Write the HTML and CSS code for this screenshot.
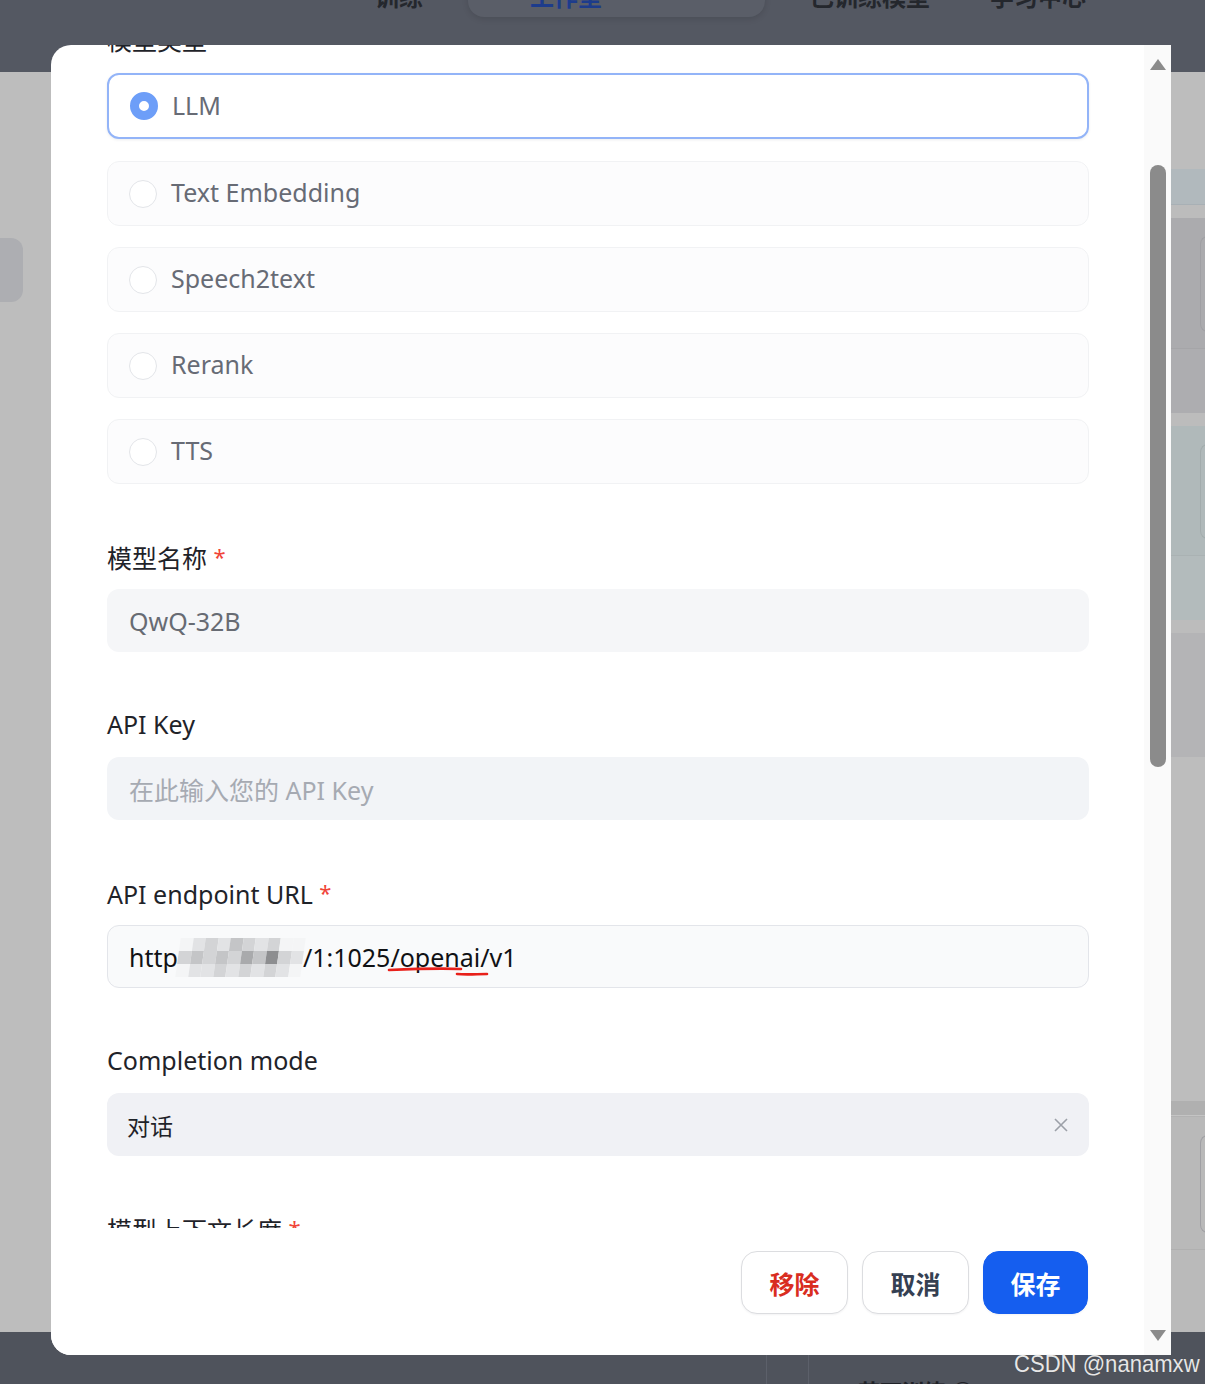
FILE: index.html
```html
<!DOCTYPE html>
<html lang="zh-CN">
<head>
<meta charset="utf-8">
<title>模型设置</title>
<link rel="stylesheet" href="styles.css">
</head>
<body>
<div class="page">
  <header class="topbar">
    <span class="nav-item nav-a">训练</span>
    <div class="nav-pill"><span class="nav-active">工作室</span><span class="nav-chev">⌄</span></div>
    <span class="nav-item nav-b">已训练模型</span>
    <span class="nav-item nav-c">学习中心</span>
  </header>
  <div class="middle">
    <div class="left-col"><div class="left-tab"></div></div>
    <div class="center-col"></div>
    <div class="right-col">
      <div class="band b1"></div>
      <div class="band b2"></div>
      <div class="band b3"></div>
      <div class="band b4"><div class="card-edge"></div></div>
      <div class="band b5"></div>
      <div class="band b3"></div>
      <div class="band b6"><div class="card-edge teal"></div></div>
      <div class="band b7"></div>
      <div class="band b3"></div>
      <div class="band b8"></div>
      <div class="band b9"></div>
      <div class="band b10"></div>
      <div class="band b11"><div class="card-edge"></div></div>
      <div class="band b12"></div>
    </div>
  </div>
  <footer class="bottombar">
    <div class="bottom-line l1"></div>
    <div class="bottom-line l2"></div>
    <span class="bottom-text">节可训练 ○</span>
  </footer>
</div>

<div class="watermark">CSDN @nanamxw</div>

<div class="modal">
  <div class="modal-main">
    <div class="scroll">
      <div class="content">
        <div class="label first">模型类型</div>
        <div class="options">
          <div class="option selected"><span class="radio on"></span><span class="opt-text">LLM</span></div>
          <div class="option"><span class="radio"></span><span class="opt-text">Text Embedding</span></div>
          <div class="option"><span class="radio"></span><span class="opt-text">Speech2text</span></div>
          <div class="option"><span class="radio"></span><span class="opt-text">Rerank</span></div>
          <div class="option"><span class="radio"></span><span class="opt-text">TTS</span></div>
        </div>

        <div class="field">
          <div class="label">模型名称 <span class="req">*</span></div>
          <div class="input filled">QwQ-32B</div>
        </div>

        <div class="field">
          <div class="label">API Key</div>
          <div class="input placeholder">在此输入您的 API Key</div>
        </div>

        <div class="field">
          <div class="label">API endpoint URL <span class="req">*</span></div>
          <div class="input url">
            <span>http</span><span class="mosaic">
              <i class="m0"></i><i class="m1"></i><i class="m2"></i><i class="m1"></i><i class="m3"></i><i class="m2"></i><i class="m1"></i><i class="m2"></i><i class="m0"></i><i class="m0"></i>
              <i class="m2"></i><i class="m3"></i><i class="m2"></i><i class="m3"></i><i class="m2"></i><i class="m4"></i><i class="m3"></i><i class="m5"></i><i class="m2"></i><i class="m1"></i>
              <i class="m0"></i><i class="m1"></i><i class="m1"></i><i class="m2"></i><i class="m1"></i><i class="m2"></i><i class="m1"></i><i class="m2"></i><i class="m1"></i><i class="m0"></i>
            </span><span class="after">/1:1025/<span class="mark">openai/</span>v1</span>
            <svg class="scribble" width="104" height="12" viewBox="0 0 104 12"><path d="M2 4 C 25 3, 50 2, 74 3" stroke="#e8201a" stroke-width="2.6" fill="none" stroke-linecap="round"/><path d="M70 8 C 80 9, 90 8, 100 8" stroke="#e8201a" stroke-width="2.6" fill="none" stroke-linecap="round"/></svg>
          </div>
        </div>

        <div class="field">
          <div class="label">Completion mode</div>
          <div class="input select"><span>对话</span>
            <svg class="clear" width="16" height="16" viewBox="0 0 16 16"><path d="M2 2 L14 14 M14 2 L2 14" stroke="#9ca0a8" stroke-width="1.6" fill="none"/></svg>
          </div>
        </div>

        <div class="field">
          <div class="label">模型上下文长度 <span class="req">*</span></div>
          <div class="input filled">32768</div>
        </div>
      </div>
    </div>
    <div class="footer">
      <button class="btn danger">移除</button>
      <button class="btn plain">取消</button>
      <button class="btn primary">保存</button>
    </div>
  </div>
  <div class="scrollbar">
    <span class="arrow up"></span>
    <span class="thumb"></span>
    <span class="arrow down"></span>
  </div>
</div>
</body>
</html>
```

FILE: styles.css
```css
* { box-sizing: border-box; }
html, body { margin: 0; padding: 0; }
body {
  width: 1205px;
  height: 1384px;
  overflow: hidden;
  background: #bdbdbd;
  font-family: "Noto Sans", "Noto Sans CJK SC", sans-serif;
  position: relative;
}

.page { display: flex; flex-direction: column; height: 1384px; }

.topbar {
  height: 72px;
  background: #545862;
  position: relative;
  flex: none;
}
.nav-item {
  position: absolute;
  top: -22px;
  font-size: 24px;
  color: #24272d;
  font-weight: 600;
}
.nav-a { left: 375px; }
.nav-b { left: 810px; }
.nav-c { left: 990px; }
.nav-pill {
  position: absolute;
  left: 468px;
  top: -30px;
  width: 297px;
  height: 47px;
  background: #5a5e68;
  border-radius: 16px;
  box-shadow: 0 2px 6px rgba(0,0,0,0.12);
}
.nav-active {
  position: absolute;
  left: 62px;
  top: 8px;
  font-size: 24px;
  font-weight: 600;
  color: #1d3c8c;
}
.nav-chev { position: absolute; left: 150px; top: 2px; color: #2a2d35; font-size: 20px; }

.middle { flex: 1; display: flex; }
.left-col { width: 51px; padding-top: 166px; }
.left-tab {
  width: 23px;
  height: 64px;
  background: #adaeb2;
  border-radius: 0 12px 12px 0;
}
.center-col { flex: 1; }
.right-col { width: 34px; display: flex; flex-direction: column; }
.band { position: relative; flex: none; }
.b1 { height: 97px; background: #bdbdbd; }
.b2 { height: 36px; background: #b1b9bd; border-bottom: 1px solid #a8b0b5; }
.b3 { height: 13px; background: #bcbcbc; }
.b4 { height: 130px; background: #ababae; }
.b5 { height: 65px; background: #adadb0; border-top: 1px solid #a5a5a8; }
.b6 { height: 129px; background: #b0b9ba; }
.b7 { height: 65px; background: #b3bbbc; border-top: 1px solid #aab2b3; }
.b8 { height: 124px; background: #b4b4b6; }
.b9 { height: 344px; background: #bdbdbd; }
.b10 { height: 15px; background: #b0b0b0; border-bottom: 1px solid #c4c4c4; }
.b11 { height: 134px; background: #b9b9b9; border-top: 1px solid #b2b2b2; border-bottom: 1px solid #b0b0b0; }
.b12 { flex: 1; background: #bababa; }
.card-edge {
  position: absolute;
  left: 29px; top: 18px; bottom: 16px; width: 10px;
  border: 1px solid #a0a0a4;
  border-right: none;
  border-radius: 8px 0 0 8px;
}
.card-edge.teal { border-color: #a3acad; }

.bottombar {
  height: 52px;
  background: #4f535c;
  position: relative;
  flex: none;
}
.bottom-line { position: absolute; top: 0; bottom: 0; width: 1px; background: #5c606a; }
.l1 { left: 766px; }
.l2 { left: 808px; }
.bottom-text {
  position: absolute;
  left: 858px;
  top: 42px;
  font-size: 22px;
  font-weight: 700;
  color: #1f2228;
}

.watermark {
  position: absolute;
  left: 1014px;
  top: 1350px;
  font-family: "Liberation Sans", Arial, sans-serif;
  font-size: 24px;
  color: #e6e6e6;
  text-shadow: 0 0 1px rgba(0,0,0,0.3);
  transform: scaleX(0.92);
  transform-origin: left top;
  white-space: nowrap;
  z-index: 3;
}

/* modal */
.modal {
  position: absolute;
  left: 51px;
  top: 45px;
  width: 1120px;
  height: 1310px;
  background: #ffffff;
  border-radius: 20px 0 0 20px;
  display: flex;
  overflow: hidden;
  z-index: 2;
}
.modal-main { flex: 1; display: flex; flex-direction: column; }
.scroll { height: 1183px; overflow: hidden; flex: none; }
.content { padding: 0 55px 0 56px; margin-top: -22px; }

.label {
  font-size: 25px;
  line-height: 34px;
  height: 34px;
  color: #1f2329;
  white-space: nowrap;
}
.label .req { color: #f04438; font-size: 22px; vertical-align: 3px; }
.label.first { margin-bottom: 16px; }

.options { display: flex; flex-direction: column; gap: 21px; }
.option {
  height: 65px;
  border: 1px solid #f1f2f4;
  background: #fcfcfd;
  border-radius: 12px;
  display: flex;
  align-items: center;
  padding-left: 21px;
  gap: 14px;
}
.option.selected {
  height: 66px;
  border: 2px solid #93b4f8;
  background: #ffffff;
  margin-bottom: 1px;
  box-shadow: 0 1px 3px rgba(16,24,40,0.08);
  padding-left: 21px;
}
.radio {
  width: 28px; height: 28px;
  border-radius: 50%;
  border: 1px solid #e3e5e9;
  background: #ffffff;
  flex: none;
}
.radio.on {
  border: 9px solid #6d9ef8;
  background: #ffffff;
}
.opt-text { font-size: 25px; color: #676b75; line-height: 1; margin-top: -2px; }

.field { margin-top: 55px; }
.field .label { margin-bottom: 16px; }
.input {
  height: 63px;
  border-radius: 12px;
  background: #f5f6f8;
  display: flex;
  align-items: center;
  padding-left: 22px;
  font-size: 25px;
  color: #676b73;
  position: relative;
}
.input.placeholder { background: #f2f4f7; color: #a6aab2; }
.input.url {
  background: #f9fafb;
  border: 1px solid #e3e5ea;
  color: #101114;
  font-size: 25px;
  padding-left: 21px;
}
.input.select { background: #f0f1f5; color: #1f2329; font-size: 23px; padding-left: 20px; justify-content: space-between; padding-right: 20px; }
.clear { flex: none; }

.mosaic {
  display: inline-grid;
  grid-template-columns: repeat(10, 12.5px);
  grid-template-rows: repeat(3, 13px);
  width: 125px;
  height: 39px;
  margin-top: 2px;
  transform: skewX(-8deg);
}
.mosaic i { display: block; }
.m0 { background: #f4f5f6; }
.m1 { background: #e2e3e5; }
.m2 { background: #d3d4d6; }
.m3 { background: #c4c5c7; }
.m4 { background: #a9aaac; }
.m5 { background: #8d8e90; }
.after { white-space: nowrap; }
.scribble { position: absolute; left: 279px; top: 40px; }

.footer {
  flex: 1;
  display: flex;
  justify-content: flex-end;
  align-items: flex-start;
  gap: 14px;
  padding: 23px 56px 0 0;
  background: #ffffff;
}
.btn {
  height: 63px;
  width: 107px;
  border-radius: 16px;
  border: 1px solid #dcdde0;
  background: #ffffff;
  font-family: "Noto Sans CJK SC", "Noto Sans", sans-serif;
  font-size: 25px;
  font-weight: 700;
  box-shadow: 0 1px 2px rgba(16,24,40,0.05);
  padding: 0;
}
.btn.danger { color: #d92d20; }
.btn.plain { color: #354052; }
.btn.primary { background: #155eef; border-color: #155eef; color: #ffffff; width: 105px; }

.scrollbar {
  width: 27px;
  background: #fafafa;
  display: flex;
  flex-direction: column;
  align-items: center;
  padding: 14px 0 14px;
  flex: none;
}
.arrow {
  width: 0; height: 0;
  border-left: 8px solid transparent;
  border-right: 8px solid transparent;
}
.arrow.up { border-bottom: 11px solid #8b8b8b; }
.arrow.down { border-top: 11px solid #8b8b8b; margin-top: auto; }
.thumb {
  width: 16px;
  height: 602px;
  margin-top: 95px;
  background: #8b8b8b;
  border-radius: 8px;
}
```
